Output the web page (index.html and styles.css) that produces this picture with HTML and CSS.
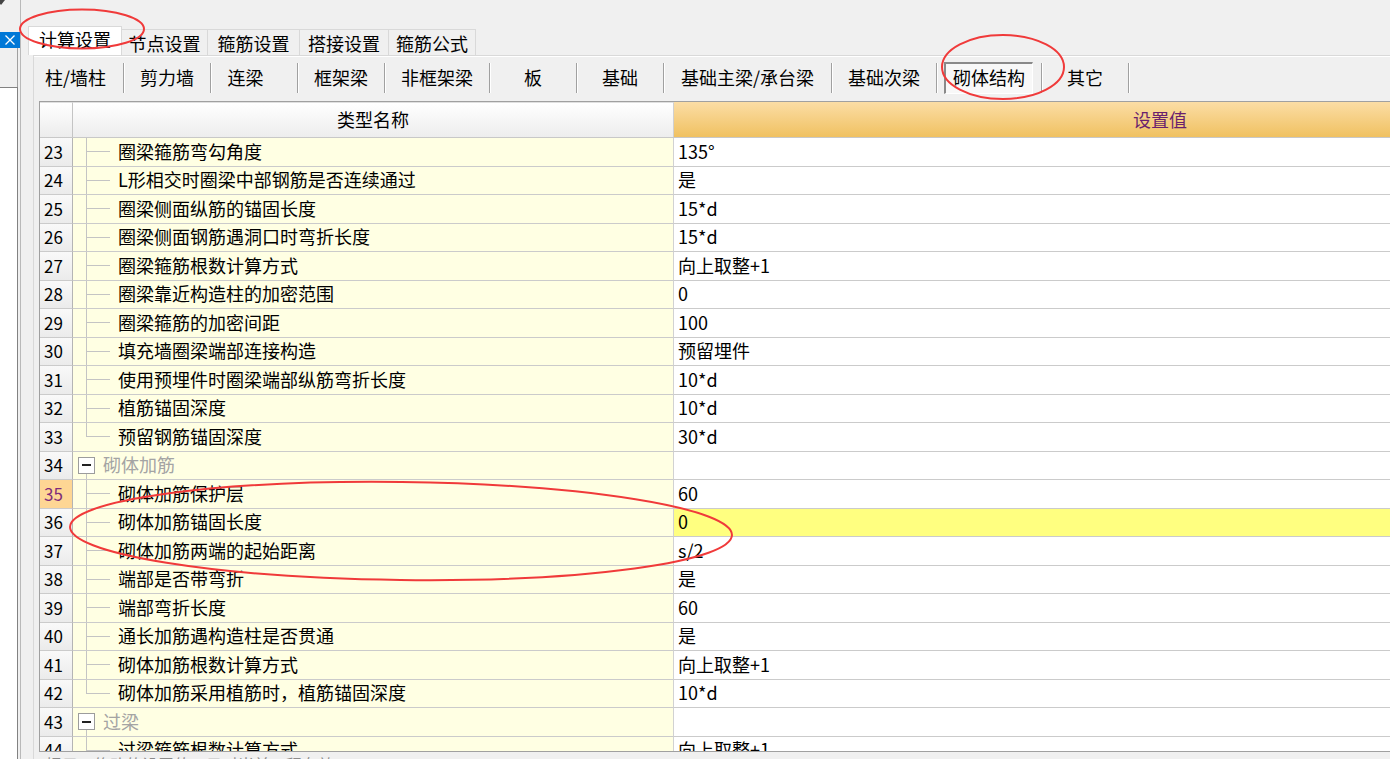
FILE: index.html
```html
<!DOCTYPE html>
<html lang="zh-CN">
<head>
<meta charset="utf-8">
<title>计算设置</title>
<link rel="stylesheet" href="styles.css">
</head>
<body>
<div class="app">
  <aside class="side">
    <div class="side-top"><span class="tri"></span></div>
    <div class="side-close"><svg width="12" height="12" viewBox="0 0 12 12"><path d="M1.5 1.5L10.5 10.5M10.5 1.5L1.5 10.5" stroke="#fff" stroke-width="1.3" fill="none"/></svg></div>
    <div class="side-box"></div>
    <div class="side-list"></div>
  </aside>
  <main class="main">
    <div class="tabs">
      <div class="tab active">计算设置</div>
      <div class="tab">节点设置</div>
      <div class="tab">箍筋设置</div>
      <div class="tab">搭接设置</div>
      <div class="tab">箍筋公式</div>
    </div>
    <div class="page">
      <div class="subtabs">
        <div class="st">柱/墙柱</div>
        <div class="st">剪力墙</div>
        <div class="st">连梁</div>
        <div class="st">框架梁</div>
        <div class="st">非框架梁</div>
        <div class="st">板</div>
        <div class="st">基础</div>
        <div class="st">基础主梁/承台梁</div>
        <div class="st">基础次梁</div>
        <div class="st on"><span class="press">砌体结构</span></div>
        <div class="st">其它</div>
      </div>
      <div class="grid">
        <div class="ghead">
          <div class="h-num"></div>
          <div class="h-name">类型名称</div>
          <div class="h-val">设置值</div>
        </div>
        <div class="gbody">
          <div class="row"><div class="num">23</div><div class="name"><span class="tree"></span><span class="label">圈梁箍筋弯勾角度</span></div><div class="val">135°</div></div>
          <div class="row"><div class="num">24</div><div class="name"><span class="tree"></span><span class="label">L形相交时圈梁中部钢筋是否连续通过</span></div><div class="val">是</div></div>
          <div class="row"><div class="num">25</div><div class="name"><span class="tree"></span><span class="label">圈梁侧面纵筋的锚固长度</span></div><div class="val">15*d</div></div>
          <div class="row"><div class="num">26</div><div class="name"><span class="tree"></span><span class="label">圈梁侧面钢筋遇洞口时弯折长度</span></div><div class="val">15*d</div></div>
          <div class="row"><div class="num">27</div><div class="name"><span class="tree"></span><span class="label">圈梁箍筋根数计算方式</span></div><div class="val">向上取整+1</div></div>
          <div class="row"><div class="num">28</div><div class="name"><span class="tree"></span><span class="label">圈梁靠近构造柱的加密范围</span></div><div class="val">0</div></div>
          <div class="row"><div class="num">29</div><div class="name"><span class="tree"></span><span class="label">圈梁箍筋的加密间距</span></div><div class="val">100</div></div>
          <div class="row"><div class="num">30</div><div class="name"><span class="tree"></span><span class="label">填充墙圈梁端部连接构造</span></div><div class="val">预留埋件</div></div>
          <div class="row"><div class="num">31</div><div class="name"><span class="tree"></span><span class="label">使用预埋件时圈梁端部纵筋弯折长度</span></div><div class="val">10*d</div></div>
          <div class="row"><div class="num">32</div><div class="name"><span class="tree"></span><span class="label">植筋锚固深度</span></div><div class="val">10*d</div></div>
          <div class="row"><div class="num">33</div><div class="name"><span class="tree last"></span><span class="label">预留钢筋锚固深度</span></div><div class="val">30*d</div></div>
          <div class="row grp"><div class="num">34</div><div class="name"><span class="node"><span class="toggle"></span></span><span class="label">砌体加筋</span></div><div class="val"></div></div>
          <div class="row"><div class="num cur">35</div><div class="name"><span class="tree"></span><span class="label">砌体加筋保护层</span></div><div class="val">60</div></div>
          <div class="row"><div class="num">36</div><div class="name"><span class="tree"></span><span class="label">砌体加筋锚固长度</span></div><div class="val sel">0</div></div>
          <div class="row"><div class="num">37</div><div class="name"><span class="tree"></span><span class="label">砌体加筋两端的起始距离</span></div><div class="val">s/2</div></div>
          <div class="row"><div class="num">38</div><div class="name"><span class="tree"></span><span class="label">端部是否带弯折</span></div><div class="val">是</div></div>
          <div class="row"><div class="num">39</div><div class="name"><span class="tree"></span><span class="label">端部弯折长度</span></div><div class="val">60</div></div>
          <div class="row"><div class="num">40</div><div class="name"><span class="tree"></span><span class="label">通长加筋遇构造柱是否贯通</span></div><div class="val">是</div></div>
          <div class="row"><div class="num">41</div><div class="name"><span class="tree"></span><span class="label">砌体加筋根数计算方式</span></div><div class="val">向上取整+1</div></div>
          <div class="row"><div class="num">42</div><div class="name"><span class="tree last"></span><span class="label">砌体加筋采用植筋时，植筋锚固深度</span></div><div class="val">10*d</div></div>
          <div class="row grp"><div class="num">43</div><div class="name"><span class="node"><span class="toggle"></span></span><span class="label">过梁</span></div><div class="val"></div></div>
          <div class="row"><div class="num">44</div><div class="name"><span class="tree"></span><span class="label">过梁箍筋根数计算方式</span></div><div class="val">向上取整+1</div></div>
        </div>
      </div>
      <div class="hint">提示：修改的设置值，只对当前工程有效</div>
    </div>
  </main>
</div>
<svg class="marks" width="1390" height="759" viewBox="0 0 1390 759">
  <ellipse cx="82" cy="29" rx="62" ry="19.5" fill="none" stroke="#f03a3a" stroke-width="2"/>
  <ellipse cx="1003" cy="67" rx="61" ry="32" fill="none" stroke="#f03a3a" stroke-width="2"/>
  <ellipse cx="401" cy="531" rx="331" ry="49" fill="none" stroke="#f03a3a" stroke-width="2" transform="rotate(0.7 401 531)"/>
</svg>
</body>
</html>
```

FILE: styles.css
```css
html, body {
  margin: 0;
  padding: 0;
  overflow: hidden;
}

body {
  width: 1390px;
  height: 759px;
  position: relative;
  background: #f0f0f0;
  font-family: "Noto Sans CJK SC", "Noto Sans", sans-serif;
  font-size: 18px;
  line-height: 1.2;
  color: #000;
}

.app {
  display: flex;
  height: 759px;
}

/* left docked strip */
.side {
  width: 21px;
  flex: none;
  display: flex;
  flex-direction: column;
  border-right: 1px solid #b9b9b9;
  box-sizing: border-box;
}

.side-top {
  height: 32px;
}

.tri {
  display: block;
  width: 0;
  height: 0;
  margin-left: -3px;
  border-left: 4px solid transparent;
  border-right: 4px solid transparent;
  border-top: 5px solid #444;
}

.side-close {
  width: 20px;
  height: 16px;
  background: #0078d7;
  display: flex;
  align-items: center;
  justify-content: center;
}

.side-box {
  width: 17px;
  height: 39px;
  border-right: 1px solid #a0a0a0;
}

.side-list {
  flex: 1;
  width: 17px;
  background: #fff;
  border-top: 1px solid #828282;
  border-right: 1px solid #828282;
}

/* main */
.main {
  flex: 1;
  min-width: 0;
  display: flex;
  flex-direction: column;
}

.tabs {
  display: flex;
  align-items: flex-end;
  height: 55px;
  padding-left: 7px;
  flex: none;
}

.tab {
  height: 26px;
  box-sizing: border-box;
  border-top: 1px solid #d9d9d9;
  border-right: 1px solid #d9d9d9;
  background: #f0f0f0;
  display: flex;
  align-items: center;
  justify-content: center;
  padding-top: 3px;
  flex: none;
}

.tab.active {
  height: 29px;
  background: #fff;
  border-left: 1px solid #d9d9d9;
  padding-top: 0;
  padding-bottom: 2px;
}

.tab:nth-child(1) { width: 94px; }
.tab:nth-child(2) { width: 86px; }
.tab:nth-child(3) { width: 92px; }
.tab:nth-child(4) { width: 89px; }
.tab:nth-child(5) { width: 87px; }

.page {
  flex: 1;
  margin-left: 12px;
  border-top: 1px solid #d9d9d9;
  border-left: 1px solid #d9d9d9;
  display: flex;
  flex-direction: column;
  min-width: 0;
}

.subtabs {
  height: 42px;
  box-sizing: border-box;
  border-top: 1px solid #fff;
  display: flex;
  align-items: center;
  flex: none;
}

.st {
  height: 30px;
  box-sizing: border-box;
  flex: none;
  display: flex;
  align-items: center;
  justify-content: center;
  border-right: 1px solid #a0a0a0;
  box-shadow: 1px 0 0 #fff;
  white-space: nowrap;
}

.st:nth-child(1) { width: 90px; padding-right: 6px; }
.st:nth-child(2) { width: 87px; }
.st:nth-child(3) { width: 87px; padding-right: 17px; }
.st:nth-child(4) { width: 87px; }
.st:nth-child(5) { width: 105px; }
.st:nth-child(6) { width: 87px; }
.st:nth-child(7) { width: 87px; }
.st:nth-child(8) { width: 168px; }
.st:nth-child(9) { width: 105px; }
.st:nth-child(10) { width: 105px; }
.st:nth-child(11) { width: 87px; }

.st.on {
  padding: 0 8px 0 7px;
}

.press {
  height: 32px;
  box-sizing: border-box;
  flex: 1;
  display: flex;
  align-items: center;
  justify-content: center;
  border-top: 2px solid #8a8a8a;
  border-left: 2px solid #8a8a8a;
  border-bottom: 1px solid #fff;
  border-right: 1px solid #fff;
  background: #f8f8f8;
}

/* grid */
.grid {
  flex: none;
  width: 1640px;
  height: 651px;
  margin: 3px 0 0 5px;
  box-sizing: border-box;
  border: 1px solid #a0a0a0;
  border-right: none;
  background: #fff;
  display: flex;
  flex-direction: column;
  overflow: hidden;
}

.ghead {
  display: grid;
  grid-template-columns: 33px 601px 972px;
  height: 36px;
  flex: none;
  box-sizing: border-box;
  border-bottom: 1px solid #c8c8c8;
}

.h-num {
  background: linear-gradient(#ffffff, #ececec);
  border-right: 1px solid #c4c4c4;
  border-top: 1px solid #e0e0e0;
}

.h-name {
  background: linear-gradient(#ffffff, #ededed);
  border-right: 1px solid #d0d0d0;
  border-top: 1px solid #e0e0e0;
  display: flex;
  align-items: center;
  justify-content: center;
}

.h-val {
  background: linear-gradient(#fbdda5, #f0c161);
  color: #6a1f6e;
  display: flex;
  align-items: center;
  justify-content: center;
}

.gbody {
  flex: 1;
  overflow: hidden;
}

.row {
  display: grid;
  grid-template-columns: 33px 601px 972px;
  height: 28.5px;
}

.row > div {
  box-sizing: border-box;
  border-bottom: 1px solid #cbcbcb;
  min-width: 0;
}

.num {
  background: linear-gradient(#f9f9f9, #ebebeb);
  border-right: 1px solid #b4b4b4;
  padding-left: 4px;
  display: flex;
  align-items: center;
  font-size: 17px;
}

.num.cur {
  background: #fed694;
  color: #7e2c7a;
}

.name {
  background: #ffffe3;
  border-right: 1px solid #d2d2d2;
  display: flex;
  align-items: stretch;
}

.tree {
  flex: none;
  width: 24px;
  margin-left: 13px;
  margin-right: 8px;
  background:
    linear-gradient(#c4c4c4, #c4c4c4) no-repeat 0 0 / 1px 100%,
    linear-gradient(#c4c4c4, #c4c4c4) no-repeat 0 50% / 100% 1px;
}

.tree.last {
  background:
    linear-gradient(#c4c4c4, #c4c4c4) no-repeat 0 0 / 1px 50%,
    linear-gradient(#c4c4c4, #c4c4c4) no-repeat 0 50% / 100% 1px;
}

.node {
  flex: none;
  width: 17px;
  margin-left: 5px;
  margin-right: 8px;
  display: flex;
  align-items: center;
  background: linear-gradient(#c4c4c4, #c4c4c4) no-repeat 8px 100% / 1px 50%;
}

.toggle {
  display: block;
  width: 17px;
  height: 17px;
  box-sizing: border-box;
  border: 1px solid #9c9c9c;
  background:
    linear-gradient(#222, #222) no-repeat center / 9px 2px,
    #fff;
}

.label {
  display: flex;
  align-items: center;
  white-space: nowrap;
}

.grp .label {
  color: #a4a4a4;
}

.val {
  background: #fff;
  padding-left: 4px;
  display: flex;
  align-items: center;
  white-space: nowrap;
}

.val.sel {
  background: #ffff80;
}

.hint {
  margin: 3px 0 0 12px;
  font-size: 16px;
  color: #8a8a8a;
  white-space: nowrap;
}

.marks {
  position: absolute;
  left: 0;
  top: 0;
  pointer-events: none;
}
```
